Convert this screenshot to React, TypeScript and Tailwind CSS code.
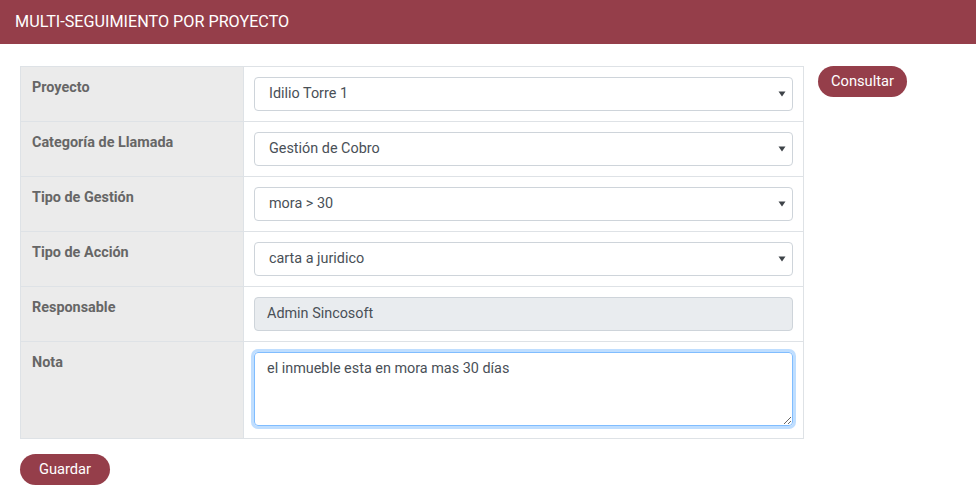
const font = { fontFamily: "Roboto, 'Liberation Sans', sans-serif" };

function Caret() {
  return (
    <svg width="8" height="6" viewBox="0 0 8 6" className="pointer-events-none absolute right-[7px] top-1/2 -translate-y-1/2">
      <path d="M0.5 0.5 H7.5 L4 5.5 Z" fill="#3e4348" />
    </svg>
  );
}

function SelectBox({ value }: { value: string }) {
  return (
    <div className="relative">
      <select
        defaultValue={value}
        className="h-[34px] w-full appearance-none rounded-[4px] border border-[#ced4da] bg-white pl-[14px] pr-8 text-[14.4px] text-[#495057] outline-none"
        style={font}
      >
        <option>{value}</option>
      </select>
      <Caret />
    </div>
  );
}

const rows = [
  { label: "Proyecto", value: "Idilio Torre 1" },
  { label: "Categoría de Llamada", value: "Gestión de Cobro" },
  { label: "Tipo de Gestión", value: "mora > 30" },
  { label: "Tipo de Acción", value: "carta a juridico" },
];

const labelCls =
  "w-[223px] border border-[#dee2e6] bg-[#ebebeb] px-[11px] pt-[10px] align-top text-[14.4px] font-bold text-[#666]";
const valueCls = "border border-[#dee2e6] px-[10px] py-[10px] align-top";

export default function App() {
  return (
    <div className="min-h-[492px] bg-white" style={font}>
      <div className="flex h-[44px] items-center bg-[#953e4a] px-[15px] text-[16.2px] text-white">
        MULTI-SEGUIMIENTO POR PROYECTO
      </div>

      <div className="flex items-start gap-[14px] px-[20px] pt-[22px]">
        <div>
          <table className="w-[784px] border-collapse border border-[#dee2e6]">
            <tbody>
              {rows.map((r) => (
                <tr key={r.label} className="h-[55px]">
                  <td className={labelCls}>{r.label}</td>
                  <td className={valueCls}>
                    <SelectBox value={r.value} />
                  </td>
                </tr>
              ))}
              <tr className="h-[55px]">
                <td className={labelCls}>Responsable</td>
                <td className={valueCls}>
                  <div className="flex h-[34px] items-center rounded-[4px] border border-[#ced4da] bg-[#e9ecef] pl-[12px] text-[14.4px] text-[#495057]">
                    Admin Sincosoft
                  </div>
                </td>
              </tr>
              <tr className="h-[97px]">
                <td className={labelCls}>Nota</td>
                <td className={valueCls}>
                  <textarea
                    defaultValue="el inmueble esta en mora mas 30 días"
                    className="block h-[74px] w-full rounded-[4px] border border-[#80bdff] px-[12px] pt-[5px] text-[14.4px] text-[#495057] shadow-[0_0_0_3px_rgba(0,123,255,0.25)] outline-none"
                    style={font}
                  />
                </td>
              </tr>
            </tbody>
          </table>

          <button className="mt-[15px] h-[31px] w-[90px] rounded-full bg-[#953e4a] text-[14.7px] text-white">
            Guardar
          </button>
        </div>

        <button className="h-[31px] w-[89px] rounded-full bg-[#953e4a] text-[14.7px] text-white">
          Consultar
        </button>
      </div>
    </div>
  );
}
